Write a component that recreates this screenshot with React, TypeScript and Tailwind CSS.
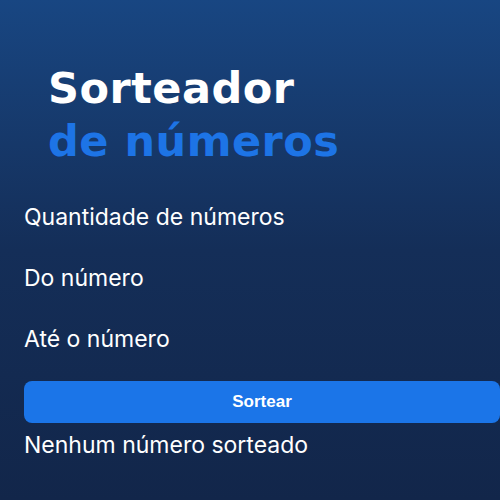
export default function App() {
  return (
    <div className="min-h-[500px] w-[500px] bg-gradient-to-b from-[#184682] via-[#142e58] to-[#12264a] font-['Inter',sans-serif] text-white overflow-hidden">
      <div className="pt-[62px] pl-[48px]">
        <h1 className="font-['DejaVu_Sans',sans-serif] text-[43px] font-bold leading-[53px] tracking-[0.5px]">
          <span className="block text-white">Sorteador</span>
          <span className="block text-[#1d74e6]">de números</span>
        </h1>
      </div>
      <form className="mt-[34px] flex flex-col px-6 text-[23px]">
        <label className="leading-[30px]">Quantidade de números</label>
        <label className="mt-[31px] leading-[30px]">Do número</label>
        <label className="mt-[31px] leading-[30px]">Até o número</label>
        <button
          type="button"
          className="mt-[27px] h-[42px] w-[476px] rounded-lg bg-[#1b75e8] font-['Liberation_Sans',sans-serif] text-[17px] font-bold text-white"
        >
          Sortear
        </button>
        <p className="mt-[7px] leading-[30px]">Nenhum número sorteado</p>
      </form>
    </div>
  );
}
